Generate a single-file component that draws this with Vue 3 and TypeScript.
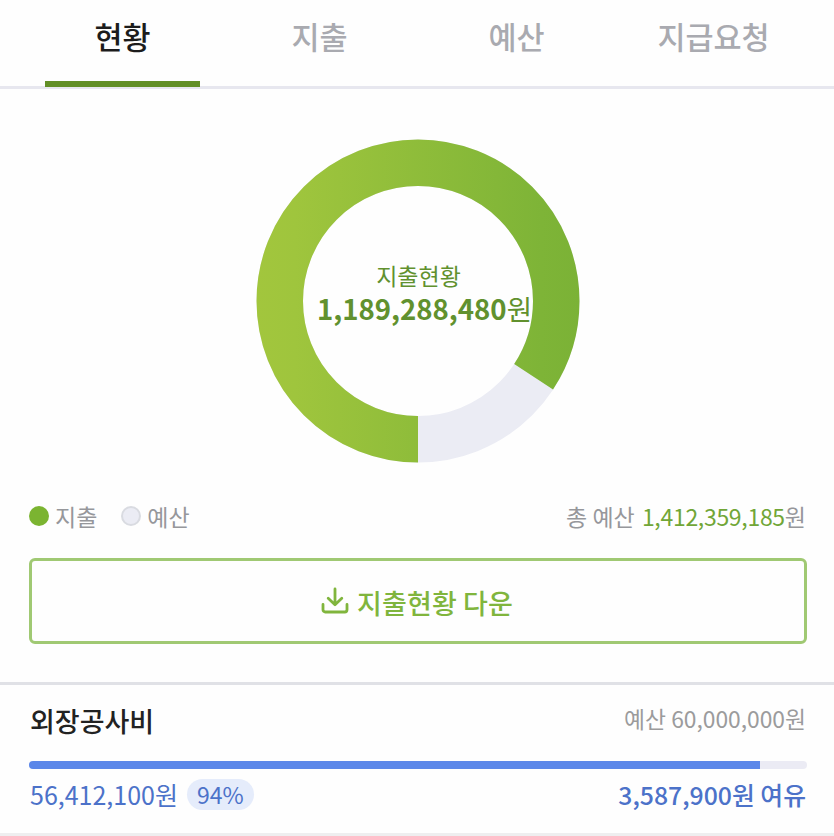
<script setup lang="ts">
import { computed, ref } from 'vue'

interface CostItem {
  name: string
  budget: number
  spent: number
}

const tabs: string[] = ['현황', '지출', '예산', '지급요청']
const activeTab = ref<number>(0)

const totalBudget = 1412359185
const totalSpent = 1189288480

const items: CostItem[] = [{ name: '외장공사비', budget: 60000000, spent: 56412100 }]

const format = (value: number): string => value.toLocaleString('en-US')
const percent = (item: CostItem): number => Math.round((item.spent / item.budget) * 100)

const radius = 138.25
const circumference = 2 * Math.PI * radius
const dash = computed<string>(() => {
  const length = (totalSpent / totalBudget) * circumference
  return `${length} ${circumference - length}`
})
</script>

<template>
  <div class="page">
    <nav class="tabs">
      <button
        v-for="(tab, index) in tabs"
        :key="tab"
        type="button"
        class="tab"
        :class="{ active: index === activeTab }"
        @click="activeTab = index"
      >
        <span class="tab-label">{{ tab }}</span>
      </button>
    </nav>

    <section class="summary">
      <div class="chart">
        <svg class="donut" viewBox="0 0 324 324" aria-hidden="true">
          <defs>
            <linearGradient id="spent" gradientUnits="userSpaceOnUse" x1="0" y1="0" x2="324" y2="0">
              <stop offset="0" stop-color="#a2c63d" />
              <stop offset="0.12" stop-color="#9fc53d" />
              <stop offset="0.88" stop-color="#7eb437" />
              <stop offset="1" stop-color="#7bb236" />
            </linearGradient>
          </defs>
          <circle class="track" cx="162" cy="162" :r="radius" />
          <path
            class="value"
            d="M162 300.25A138.25 138.25 0 0 1 162 23.75A138.25 138.25 0 0 1 162 300.25"
            :stroke-dasharray="dash"
          />
        </svg>
        <div class="chart-text">
          <span class="chart-title">지출현황</span>
          <span class="chart-amount"><b>{{ format(totalSpent) }}</b>원</span>
        </div>
      </div>

      <div class="legend">
        <span class="key"><i class="dot spent"></i>지출</span>
        <span class="key"><i class="dot budget"></i>예산</span>
        <span class="total">총 예산 <em>{{ format(totalBudget) }}</em>원</span>
      </div>

      <button type="button" class="download">
        <svg class="download-icon" viewBox="0 0 28 28" aria-hidden="true">
          <path d="M14 2v15.500M7.200 11.200L14 17.800l6.800-6.600M2 17.500v5.300a2.200 2.200 0 0 0 2.200 2.200h19.600a2.200 2.200 0 0 0 2.200-2.200v-5.300" />
        </svg>
        <span class="download-label">지출현황 다운</span>
      </button>
    </section>

    <section v-for="item in items" :key="item.name" class="item">
      <div class="item-head">
        <h2 class="item-name">{{ item.name }}</h2>
        <span class="item-budget">예산 {{ format(item.budget) }}원</span>
      </div>
      <div class="bar">
        <div class="bar-fill" :style="{ width: percent(item) + '%' }"></div>
      </div>
      <div class="item-foot">
        <span class="item-spent">{{ format(item.spent) }}원</span>
        <span class="badge">{{ percent(item) }}%</span>
        <span class="item-left">{{ format(item.budget - item.spent) }}원 여유</span>
      </div>
    </section>
  </div>
</template>

<style>
body {
  margin: 0;
  background: #fefefe;
}
</style>

<style scoped>
.page {
  box-sizing: border-box;
  width: 100%;
  height: 836px;
  overflow: hidden;
  background: #fefefe;
  font-family: 'Noto Sans CJK KR', 'Noto Sans', sans-serif;
  color: #222;
}

button {
  margin: 0;
  padding: 0;
  border: 0;
  background: none;
  font: inherit;
}

.tabs {
  display: grid;
  grid-template-columns: repeat(4, 1fr);
  box-sizing: border-box;
  height: 89px;
  padding: 0 22px 0 24px;
  border-bottom: 3px solid #e7e7ef;
}

.tab {
  display: flex;
  justify-content: center;
  height: 87px;
  color: #a9aab0;
  font-size: 30.5px;
  font-weight: 500;
}

.tab-label {
  box-sizing: border-box;
  width: 155px;
  height: 87px;
  line-height: 73px;
  white-space: nowrap;
}

.active {
  color: #1c1c1c;
}

.active .tab-label {
  border-bottom: 6px solid #628f26;
}

.summary {
  display: flex;
  flex-direction: column;
  box-sizing: border-box;
  height: 593px;
  padding: 50px 27px 0 29px;
}

.chart {
  display: grid;
  place-items: center;
  height: 324px;
}

.donut,
.chart-text {
  grid-area: 1 / 1;
}

.donut {
  width: 324px;
  height: 324px;
}

.track,
.value {
  fill: none;
  stroke-width: 46.5;
}

.track {
  stroke: #ebecf4;
}

.value {
  stroke: url(#spent);
}

.chart-text {
  display: flex;
  flex-direction: column;
  align-items: center;
  margin-top: -19px;
  padding-left: 13px;
  color: #61912e;
  white-space: nowrap;
}

.chart-title {
  margin-right: 12px;
  font-size: 23px;
  line-height: 33px;
}

.chart-amount {
  font-size: 27.6px;
  line-height: 33px;
}

.legend {
  display: flex;
  align-items: center;
  height: 34px;
  margin-top: 36px;
  color: #96979b;
  font-size: 23px;
}

.key {
  display: flex;
  align-items: center;
  gap: 6px;
  margin-right: 24px;
}

.dot {
  box-sizing: border-box;
  width: 20px;
  height: 20px;
  border-radius: 50%;
}

.dot.spent {
  background: #7bb431;
}

.dot.budget {
  border: 2px solid #d9dbe1;
  background: #ebecf4;
}

.total {
  margin-left: auto;
  padding-right: 1px;
}

.total em {
  margin-left: 2px;
  color: #71a637;
  font-style: normal;
  letter-spacing: -0.3px;
}

.download {
  display: flex;
  align-items: center;
  justify-content: center;
  gap: 8px;
  box-sizing: border-box;
  height: 86px;
  margin-top: 25px;
  padding-right: 2px;
  border: 3px solid #a0c973;
  border-radius: 6px;
  color: #80b53d;
  font-size: 27px;
  font-weight: 500;
}

.download-label {
  padding-top: 3px;
  letter-spacing: 0.15px;
}

.download-icon {
  width: 28px;
  height: 28px;
  fill: none;
  stroke: currentColor;
  stroke-width: 2.8;
  stroke-linecap: round;
  stroke-linejoin: round;
}

.item {
  box-sizing: border-box;
  height: 154px;
  padding: 16px 27px 0 29px;
  border-top: 3px solid #e0e1e6;
  border-bottom: 3px solid #eeeeef;
}

.item-head,
.item-foot {
  display: flex;
  align-items: center;
  padding: 0 1px;
}

.item-head {
  height: 38px;
}

.item-name {
  margin: 0;
  font-size: 27px;
  font-weight: 500;
}

.item-budget {
  margin: -3px 0 0 auto;
  color: #9b9b9c;
  font-size: 22.8px;
}

.bar {
  height: 8px;
  margin-top: 22px;
  border-radius: 4px;
  background: #ebebf4;
  overflow: hidden;
}

.bar-fill {
  height: 100%;
  background: #5b87e9;
}

.item-foot {
  height: 34px;
  margin-top: 8px;
  color: #4c72c9;
  font-size: 25px;
}

.badge {
  width: 67px;
  margin-left: 9px;
  border-radius: 16px;
  background: #e5ecfb;
  font-size: 23px;
  line-height: 31px;
  text-align: center;
}

.item-left {
  margin-left: auto;
  font-size: 24.8px;
  font-weight: 500;
}
</style>
